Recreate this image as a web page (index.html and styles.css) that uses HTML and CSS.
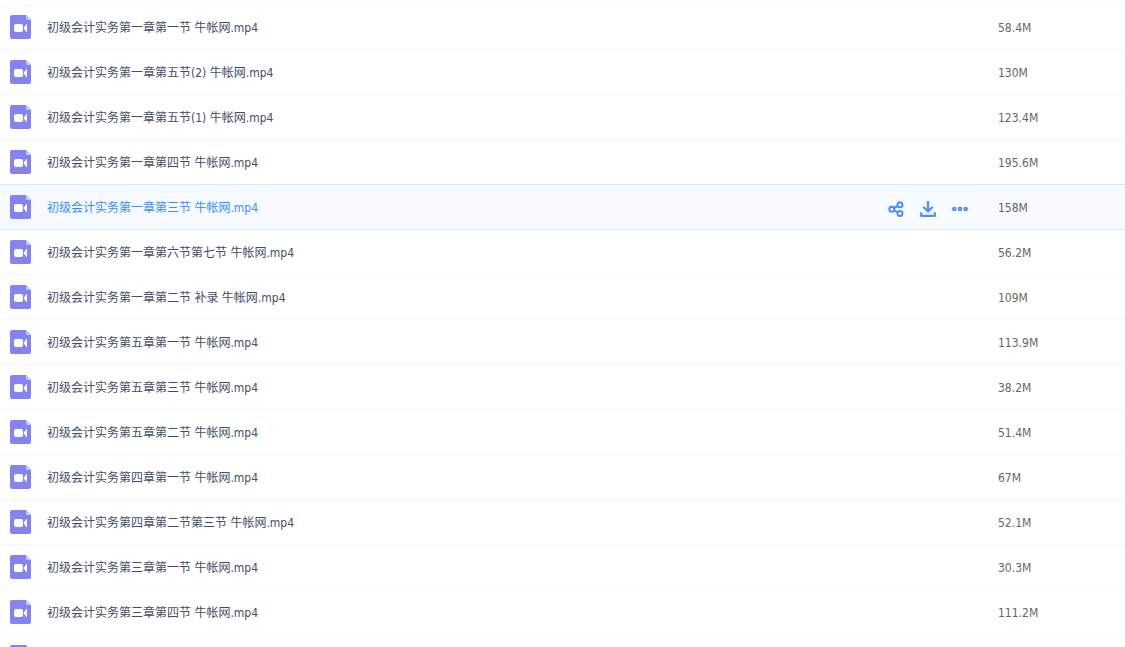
FILE: index.html
```html
<!DOCTYPE html>
<html lang="zh-CN">
<head>
    <meta charset="UTF-8">
    <title>初级会计实务</title>
    <link rel="stylesheet" href="styles.css">
</head>
<body>
    <svg class="sprite" aria-hidden="true">
        <symbol id="icon-video" viewBox="0 0 21 24">
            <path fill="#8583ef" d="M2 0h14l5 5v17a2 2 0 0 1-2 2H2a2 2 0 0 1-2-2V2a2 2 0 0 1 2-2z"/>
            <path fill="#c6c5f8" d="M16 0l5 5h-4a1 1 0 0 1-1-1z"/>
            <rect x="4" y="9" width="9" height="8" rx="2" fill="#fff"/>
            <path fill="#fff" d="M13.600 13l2.400-3.500q1-1 1 0v7q0 1-1 0z"/>
        </symbol>
        <symbol id="icon-share" viewBox="0 0 16 16">
            <g fill="none" stroke="currentColor" stroke-width="2">
                <circle cx="3.8" cy="8.200" r="2.500"/>
                <circle cx="12" cy="3.800" r="2.500"/>
                <circle cx="12" cy="12.600" r="2.500"/>
                <path d="M6 7l3.800-2M6 9.400l3.800 2"/>
            </g>
        </symbol>
        <symbol id="icon-download" viewBox="0 0 16 16">
            <path fill="none" stroke="currentColor" stroke-width="2.200" stroke-linecap="round" stroke-linejoin="round" d="M8 1v9M4 6.500l4 4 4-4M1.200 12v2.800h13.600V12"/>
        </symbol>
        <symbol id="icon-more" viewBox="0 0 16 16">
            <g fill="none" stroke="currentColor" stroke-width="1.800">
                <circle cx="2.300" cy="8" r="1.400"/>
                <circle cx="8" cy="8" r="1.400"/>
                <circle cx="13.700" cy="8" r="1.400"/>
            </g>
        </symbol>
    </svg>

    <table class="file-list">
        <tbody>
            <tr>
                <td class="name"><div class="file"><svg class="file-icon"><use href="#icon-video"/></svg><a href="#">初级会计实务第一章第一节 牛帐网.mp4</a></div></td>
                <td class="size">58.4M</td>
            </tr>
            <tr>
                <td class="name"><div class="file"><svg class="file-icon"><use href="#icon-video"/></svg><a href="#">初级会计实务第一章第五节(2) 牛帐网.mp4</a></div></td>
                <td class="size">130M</td>
            </tr>
            <tr>
                <td class="name"><div class="file"><svg class="file-icon"><use href="#icon-video"/></svg><a href="#">初级会计实务第一章第五节(1) 牛帐网.mp4</a></div></td>
                <td class="size">123.4M</td>
            </tr>
            <tr>
                <td class="name"><div class="file"><svg class="file-icon"><use href="#icon-video"/></svg><a href="#">初级会计实务第一章第四节 牛帐网.mp4</a></div></td>
                <td class="size">195.6M</td>
            </tr>
            <tr class="active">
                <td class="name">
                    <div class="file">
                        <svg class="file-icon"><use href="#icon-video"/></svg><a href="#">初级会计实务第一章第三节 牛帐网.mp4</a>
                        <div class="actions">
                            <button type="button" aria-label="分享"><svg><use href="#icon-share"/></svg></button>
                            <button type="button" aria-label="下载"><svg><use href="#icon-download"/></svg></button>
                            <button type="button" aria-label="更多"><svg><use href="#icon-more"/></svg></button>
                        </div>
                    </div>
                </td>
                <td class="size">158M</td>
            </tr>
            <tr>
                <td class="name"><div class="file"><svg class="file-icon"><use href="#icon-video"/></svg><a href="#">初级会计实务第一章第六节第七节 牛帐网.mp4</a></div></td>
                <td class="size">56.2M</td>
            </tr>
            <tr>
                <td class="name"><div class="file"><svg class="file-icon"><use href="#icon-video"/></svg><a href="#">初级会计实务第一章第二节 补录 牛帐网.mp4</a></div></td>
                <td class="size">109M</td>
            </tr>
            <tr>
                <td class="name"><div class="file"><svg class="file-icon"><use href="#icon-video"/></svg><a href="#">初级会计实务第五章第一节 牛帐网.mp4</a></div></td>
                <td class="size">113.9M</td>
            </tr>
            <tr>
                <td class="name"><div class="file"><svg class="file-icon"><use href="#icon-video"/></svg><a href="#">初级会计实务第五章第三节 牛帐网.mp4</a></div></td>
                <td class="size">38.2M</td>
            </tr>
            <tr>
                <td class="name"><div class="file"><svg class="file-icon"><use href="#icon-video"/></svg><a href="#">初级会计实务第五章第二节 牛帐网.mp4</a></div></td>
                <td class="size">51.4M</td>
            </tr>
            <tr>
                <td class="name"><div class="file"><svg class="file-icon"><use href="#icon-video"/></svg><a href="#">初级会计实务第四章第一节 牛帐网.mp4</a></div></td>
                <td class="size">67M</td>
            </tr>
            <tr>
                <td class="name"><div class="file"><svg class="file-icon"><use href="#icon-video"/></svg><a href="#">初级会计实务第四章第二节第三节 牛帐网.mp4</a></div></td>
                <td class="size">52.1M</td>
            </tr>
            <tr>
                <td class="name"><div class="file"><svg class="file-icon"><use href="#icon-video"/></svg><a href="#">初级会计实务第三章第一节 牛帐网.mp4</a></div></td>
                <td class="size">30.3M</td>
            </tr>
            <tr>
                <td class="name"><div class="file"><svg class="file-icon"><use href="#icon-video"/></svg><a href="#">初级会计实务第三章第四节 牛帐网.mp4</a></div></td>
                <td class="size">111.2M</td>
            </tr>
            <tr>
                <td class="name"><div class="file"><svg class="file-icon"><use href="#icon-video"/></svg></div></td>
                <td class="size"></td>
            </tr>
        </tbody>
    </table>
</body>
</html>
```
FILE: styles.css
```css
body {
    margin: 0;
    padding-top: 5px;
    height: 100vh;
    box-sizing: border-box;
    overflow: hidden;
    background-color: #fff;
    font-family: "DejaVu Sans Condensed", "Noto Sans CJK SC", sans-serif;
    font-size: 12px;
    line-height: 24px;
    color: #666;
}
.sprite {
    display: none;
}
.file-list {
    width: 100%;
    table-layout: fixed;
    border-collapse: separate;
    border-spacing: 0;
    box-shadow: inset 0 1px #f2f6fd;
}
.file-list td {
    padding: 10px 0;
    border-bottom: 1px solid #f2f6fd;
    vertical-align: top;
}
.file-list .name {
    padding-left: 10px;
}
.file-list .size {
    width: 127px;
    padding: 11px 0 9px;
}
.file {
    display: flex;
    align-items: center;
    height: 24px;
}
.file-icon {
    width: 21px;
    height: 24px;
    margin-right: 16px;
}
.file a {
    padding-top: 2px;
    color: #424e67;
    text-decoration: none;
}
.actions {
    display: flex;
    gap: 16px;
    margin-left: auto;
    margin-right: 30px;
    padding-top: 4px;
}
.actions button {
    width: 16px;
    height: 16px;
    padding: 0;
    border: 0;
    background: none;
    color: #4a90ee;
    cursor: pointer;
}
.actions svg {
    display: block;
    width: 16px;
    height: 16px;
}
/* selected row */
.active td {
    background-color: #f6faff;
    border-bottom-color: #d8e9fb;
}
tr:has(+ .active) td {
    border-bottom-color: #d8e9fb;
}
.active .file a {
    color: #398dfe;
}
```
